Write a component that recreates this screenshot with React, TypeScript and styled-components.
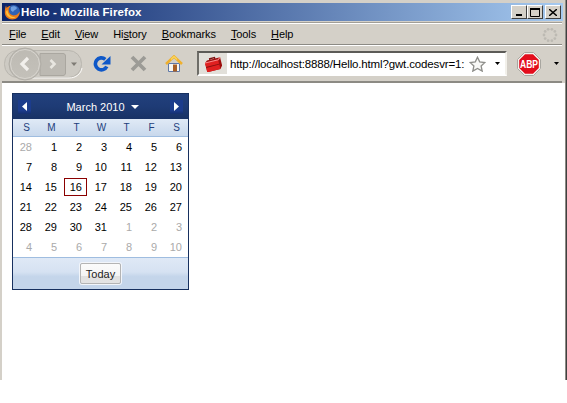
import React from "react";
import styled, { createGlobalStyle } from "styled-components";

const GlobalStyle = createGlobalStyle`
  html, body {
    margin: 0;
    padding: 0;
    background: #fff;
  }
  body {
    font-family: "Liberation Sans", Arial, sans-serif;
  }
`;

const Frame = styled.div`
  width: 567px;
  height: 380px;
  box-sizing: border-box;
  padding: 3px 2px 0;
  background: #d4d0c8;
  box-shadow: inset -1px 0 #404040, inset -2px 0 #8c8a84;
  display: flex;
  flex-direction: column;
`;

const TitleBar = styled.div`
  height: 18px;
  flex-shrink: 0;
  margin-right: 2px;
  padding: 0 2px;
  background: linear-gradient(90deg, #0a246a 0%, #a6caf0 100%);
  display: flex;
  align-items: center;
`;

const TitleText = styled.div`
  flex: 1;
  color: #fff;
  font: bold 11.5px/18px "Liberation Sans", sans-serif;
  letter-spacing: 0.1px;
`;

const WinButtons = styled.div`
  display: flex;
`;

const WinButton = styled.div<{ $gap?: boolean }>`
  width: 16px;
  height: 14px;
  margin-left: ${({ $gap }) => ($gap ? "2px" : "0")};
  box-sizing: border-box;
  background: #d4d0c8;
  border: 1px solid;
  border-color: #fff #404040 #404040 #fff;
  display: flex;
  align-items: center;
  justify-content: center;
`;

const MenuBar = styled.div`
  height: 23px;
  flex-shrink: 0;
  box-sizing: border-box;
  margin: 1px 3px 0 0;
  padding: 1px 7px 0;
  border-top: 1px solid #a09e98;
  border-bottom: 1px solid #8c8a84;
  box-shadow: inset 0 1px #fff;
  display: flex;
  align-items: center;
  gap: 15px;
  position: relative;
`;

const MenuItem = styled.span`
  font: 11px/20px "Liberation Sans", sans-serif;
  letter-spacing: -0.1px;
  color: #000;
  u {
    text-underline-offset: 1px;
  }
`;

const Toolbar = styled.div`
  height: 38px;
  flex-shrink: 0;
  box-sizing: border-box;
  margin-right: 3px;
  border-top: 1px solid #fff;
  border-bottom: 2px solid #8c8a84;
  display: flex;
  align-items: center;
  padding-left: 2px;
`;

const ToolIcon = styled.div<{ $ml: number }>`
  margin-left: ${({ $ml }) => $ml}px;
  display: flex;
  flex-shrink: 0;
`;

const UrlBar = styled.div`
  width: 310px;
  height: 25px;
  margin-left: 14px;
  box-sizing: border-box;
  display: flex;
  flex-shrink: 0;
  align-items: center;
  background: #fff;
  border: 2px solid;
  border-color: #5c5b57 #f2f0ea #fff #6e6d68;
`;

const SiteButton = styled.div`
  width: 28px;
  height: 100%;
  flex-shrink: 0;
  background: #e2e0da;
  display: flex;
  align-items: center;
  justify-content: center;
`;

const UrlText = styled.div`
  width: 236px;
  margin-left: 3px;
  flex-shrink: 0;
  white-space: nowrap;
  font: 11.5px/20px "Liberation Sans", sans-serif;
  letter-spacing: -0.15px;
  color: #000;
`;

const StarSlot = styled.div`
  margin-left: 3px;
  display: flex;
`;

const UrlArrow = styled.div`
  margin-left: 9px;
  display: flex;
`;

const Content = styled.main`
  flex: 1;
  background: #fff;
  padding: 10px 0 0 10px;
`;

const Calendar = styled.div`
  width: 177px;
  box-sizing: border-box;
  border: 1px solid #17305f;
  background: #fff;
`;

const CalHeader = styled.div`
  height: 25px;
  padding: 0 5px;
  background: linear-gradient(180deg, #22407c 0%, #1e3b75 50%, #183265 100%);
  display: flex;
  align-items: center;
  justify-content: space-between;
`;

const NavArrow = styled.div`
  width: 13px;
  height: 14px;
  background: linear-gradient(180deg, #1c3c8c 0%, #1c3c8c 75%, #16306f 100%);
  display: flex;
  align-items: center;
  justify-content: center;
`;

const MonthLabel = styled.div`
  margin-left: 4px;
  color: #fff;
  font: 11px/14px "Liberation Sans", sans-serif;
  display: flex;
  align-items: center;
  gap: 6px;
`;

const Caret = styled.span`
  width: 0;
  height: 0;
  border-left: 4px solid transparent;
  border-right: 4px solid transparent;
  border-top: 4px solid #fff;
`;

const WeekRow = styled.div`
  height: 18px;
  box-sizing: border-box;
  display: grid;
  grid-template-columns: repeat(7, 25px);
  background: linear-gradient(180deg, #e0eaf6 0%, #c8d8ec 100%);
  border-bottom: 1px solid #9fbde0;
`;

const WeekDay = styled.div`
  padding-left: 2px;
  text-align: center;
  color: #233f7c;
  font: 10px/17px "Liberation Sans", sans-serif;
`;

const Grid = styled.div`
  display: grid;
  grid-template-columns: repeat(7, 25px);
  grid-auto-rows: 20px;
  height: 120px;
`;

const DayCell = styled.div<{ $muted?: boolean; $today?: boolean }>`
  box-sizing: border-box;
  margin: 1px;
  padding-right: 4px;
  text-align: right;
  font: 11px/16px "Liberation Sans", sans-serif;
  color: ${({ $muted }) => ($muted ? "#aaa" : "#000")};
  border: 1px solid ${({ $today }) => ($today ? "#8b0000" : "transparent")};
`;

const CalFooter = styled.div`
  height: 32px;
  box-sizing: border-box;
  border-top: 1px solid #9fbde0;
  background: linear-gradient(180deg, #dfe9f6 0%, #d6e2f2 45%, #c4d5ea 60%, #c4d5ea 100%);
  display: flex;
  align-items: center;
  justify-content: center;
`;

const TodayButton = styled.button`
  width: 41px;
  height: 21px;
  padding: 0;
  border: 1px solid #b4b4b4;
  border-radius: 2px;
  background: linear-gradient(180deg, #fbfbfb 0%, #f4f4f4 62%, #e0e0e0 63%, #e4e4e4 100%);
  box-shadow: 0 0 0 1px #f2f5fa;
  color: #222;
  font: 11px/18px "Liberation Sans", sans-serif;
`;

const ThrobberSlot = styled.div`
  position: absolute;
  right: 4px;
  top: 4px;
  display: flex;
`;

const MENU: [string, string, string][] = [
  ["", "F", "ile"],
  ["", "E", "dit"],
  ["", "V", "iew"],
  ["Hi", "s", "tory"],
  ["", "B", "ookmarks"],
  ["", "T", "ools"],
  ["", "H", "elp"],
];

const WEEK = ["S", "M", "T", "W", "T", "F", "S"];

const DAYS: { n: number; muted?: boolean }[] = [
  { n: 28, muted: true },
  ...Array.from({ length: 31 }, (_, i) => ({ n: i + 1 })),
  ...[1, 2, 3, 4, 5, 6, 7, 8, 9, 10].map((n) => ({ n, muted: true })),
];

function FirefoxLogo() {
  return (
    <svg width="17" height="17" viewBox="0 0 17 17">
      <circle cx="9.500" cy="7.500" r="6.500" fill="#2f62b4" />
      <path d="M7 3c2-1.500 5-1 6 1-1 2-3 2-4 4-1-1-3-1-2-5z" fill="#6f9fe0" />
      <path
        d="M2 1.500c.5 1 .5 1.500.5 2.500C4 2.500 5 2 6.500 2 5 3.500 4.500 5 4.800 7c.5 3 3.200 4.800 6 4.300 1.800-.3 3.500-1.500 5-3.800 0 4.500-3 8-7.500 8C4 15.500.8 12.500.8 8.500.8 6 1.200 3.500 2 1.500z"
        fill="#ee7d18"
      />
      <path d="M2 8c.3 3.500 3 6 6.500 6 1.500 0 2.500-.5 3.500-1-4 .5-8-1.500-8.500-7-.8.500-1.300 1-1.500 2z" fill="#fbc23c" />
    </svg>
  );
}

function BackForward() {
  return (
    <svg width="80" height="34" viewBox="0 0 80 34">
      <defs>
        <linearGradient id="disc" x1="0" y1="0" x2="0" y2="1">
          <stop offset="0" stopColor="#bdbab3" />
          <stop offset="1" stopColor="#c4c1ba" />
        </linearGradient>
      </defs>
      <rect x="0.500" y="3.500" width="77" height="27" rx="13" fill="#cdcac3" stroke="#b9b6af" />
      <path d="M24 31h41c7 0 12-4 13-10" fill="none" stroke="#fbfaf8" />
      <path d="M36 6.500h23c1.500 0 2.500 1 2.500 2.500v17c0 1.500-1 2.500-2.500 2.500H36z" fill="#bcb9b2" stroke="#aaa7a0" />
      <circle cx="21" cy="17" r="16" fill="url(#disc)" stroke="#b1aea7" />
      <circle cx="21" cy="17" r="14.500" fill="none" stroke="#d8d5cf" />
      <path d="M24 11l-6 6 6 6" fill="none" stroke="#f1efeb" strokeWidth="3.200" />
      <path d="M46.500 13l4 4-4 4" fill="none" stroke="#e8e6e0" strokeWidth="2.600" />
      <path d="M67 15.500h6l-3 3.500z" fill="#7e7b75" />
    </svg>
  );
}

function ReloadIcon() {
  return (
    <svg width="18" height="17" viewBox="0 0 18 17">
      <path d="M13.800 11.500a6 6 0 1 1-1.500-7.200" fill="none" stroke="#0f58c8" strokeWidth="3.600" />
      <path d="M8.500 9.500h9V1z" fill="#0f58c8" />
    </svg>
  );
}

function StopIcon() {
  return (
    <svg width="17" height="17" viewBox="0 0 17 17">
      <path d="M2 2l13 13M15 2L2 15" stroke="#9c9b96" strokeWidth="3.800" />
    </svg>
  );
}

function HomeIcon() {
  return (
    <svg width="18" height="17" viewBox="0 0 18 17">
      <path d="M3.500 8.500h11v8h-11z" fill="#f8f6f0" stroke="#5f78a8" />
      <rect x="8" y="9.500" width="4" height="7" fill="#a85f25" />
      <path d="M1 9l8-7.500L17 9" fill="none" stroke="#efb02e" strokeWidth="2.600" />
      <path d="M6 4.500L9 1.500l3 3" fill="none" stroke="#fbd95e" strokeWidth="1.200" />
    </svg>
  );
}

function ToolboxIcon() {
  return (
    <svg width="17" height="16" viewBox="0 0 17 16">
      <g transform="rotate(-14 8.500 8)">
        <path d="M6 3.500V2h5v1.500" fill="none" stroke="#7c1010" strokeWidth="1.300" />
        <path d="M.5 5L3 3h13.500v8.500L14 14.500H.5z" fill="#9c0d0d" />
        <path d="M.5 5H14v9.500H.5z" fill="#e02020" />
        <path d="M.5 5H14l2.500-2" fill="none" stroke="#fb8a8a" />
        <rect x=".5" y="9" width="13.500" height="1" fill="#86100f" />
      </g>
    </svg>
  );
}

function StarIcon() {
  return (
    <svg width="17" height="16" viewBox="0 0 17 16">
      <path
        d="M8.500 1.200l2.200 4.700 5.200.6-3.800 3.500 1.100 5.100-4.700-2.700-4.700 2.700 1.100-5.100L1.100 6.500l5.200-.6z"
        fill="#f8f8f6"
        stroke="#8e8e8a"
        strokeWidth="1.300"
      />
    </svg>
  );
}

function SmallDown() {
  return (
    <svg width="5" height="3" viewBox="0 0 5 3">
      <path d="M0 0h5L2.500 3z" fill="#000" />
    </svg>
  );
}

function AbpIcon() {
  return (
    <svg width="24" height="24" viewBox="0 0 24 24">
      <path d="M7.500.5h9l7 7v9l-7 7h-9l-7-7v-9z" fill="#f4f2ee" stroke="#a8a6a0" />
      <path d="M8 2.200h8L21.800 8v8L16 21.800H8L2.200 16V8z" fill="#e30d1c" />
      <text
        x="12"
        y="16"
        textAnchor="middle"
        fill="#fff"
        fontFamily="Liberation Sans, sans-serif"
        fontWeight="700"
        fontSize="10.500"
        textLength="18"
        lengthAdjust="spacingAndGlyphs"
      >
        ABP
      </text>
    </svg>
  );
}

function Throbber() {
  const dots = Array.from({ length: 10 }, (_, i) => {
    const a = (i / 10) * Math.PI * 2;
    return { x: 8 + Math.cos(a) * 6, y: 8 + Math.sin(a) * 6 };
  });
  return (
    <svg width="16" height="16" viewBox="0 0 16 16">
      {dots.map((d, i) => (
        <circle key={i} cx={d.x} cy={d.y} r="1.400" fill="#bdbab3" />
      ))}
    </svg>
  );
}

export default function App() {
  return (
    <>
      <GlobalStyle />
      <Frame>
        <TitleBar>
          <FirefoxLogo />
          <TitleText>Hello - Mozilla Firefox</TitleText>
          <WinButtons>
            <WinButton>
              <svg width="8" height="8" viewBox="0 0 8 8">
                <rect x="1" y="6" width="6" height="2" fill="#000" />
              </svg>
            </WinButton>
            <WinButton>
              <svg width="10" height="9" viewBox="0 0 10 9">
                <path d="M.5 1.500h9v7h-9z" fill="none" stroke="#000" />
                <rect y="0" width="10" height="2" fill="#000" />
              </svg>
            </WinButton>
            <WinButton $gap>
              <svg width="8" height="7" viewBox="0 0 8 7">
                <path d="M0 0l8 7M8 0L0 7" stroke="#000" strokeWidth="1.400" />
              </svg>
            </WinButton>
          </WinButtons>
        </TitleBar>
        <MenuBar>
          {MENU.map(([before, key, rest], i) => (
            <MenuItem key={i}>
              {before}
              <u>{key}</u>
              {rest}
            </MenuItem>
          ))}
          <ThrobberSlot>
            <Throbber />
          </ThrobberSlot>
        </MenuBar>
        <Toolbar>
          <ToolIcon $ml={0}>
            <BackForward />
          </ToolIcon>
          <ToolIcon $ml={9}>
            <ReloadIcon />
          </ToolIcon>
          <ToolIcon $ml={19}>
            <StopIcon />
          </ToolIcon>
          <ToolIcon $ml={18}>
            <HomeIcon />
          </ToolIcon>
          <UrlBar>
            <SiteButton>
              <ToolboxIcon />
            </SiteButton>
            <UrlText>http://localhost:8888/Hello.html?gwt.codesvr=1:</UrlText>
            <StarSlot>
              <StarIcon />
            </StarSlot>
            <UrlArrow>
              <SmallDown />
            </UrlArrow>
          </UrlBar>
          <ToolIcon $ml={10}>
            <AbpIcon />
          </ToolIcon>
          <ToolIcon $ml={13}>
            <SmallDown />
          </ToolIcon>
        </Toolbar>
        <Content>
          <Calendar>
            <CalHeader>
              <NavArrow>
                <svg width="5" height="9" viewBox="0 0 5 9">
                  <path d="M5 0v9L0 4.500z" fill="#fff" />
                </svg>
              </NavArrow>
              <MonthLabel>
                March 2010
                <Caret />
              </MonthLabel>
              <NavArrow>
                <svg width="5" height="9" viewBox="0 0 5 9">
                  <path d="M0 0v9l5-4.500z" fill="#fff" />
                </svg>
              </NavArrow>
            </CalHeader>
            <WeekRow>
              {WEEK.map((d, i) => (
                <WeekDay key={i}>{d}</WeekDay>
              ))}
            </WeekRow>
            <Grid>
              {DAYS.map((d, i) => (
                <DayCell key={i} $muted={d.muted} $today={!d.muted && d.n === 16}>
                  {d.n}
                </DayCell>
              ))}
            </Grid>
            <CalFooter>
              <TodayButton>Today</TodayButton>
            </CalFooter>
          </Calendar>
        </Content>
      </Frame>
    </>
  );
}
